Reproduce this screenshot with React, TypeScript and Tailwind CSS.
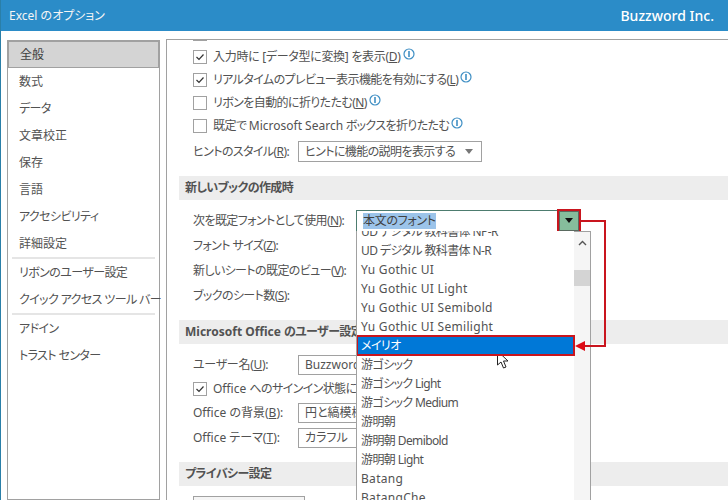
const navGroups = [
  ["全般", "数式", "データ", "文章校正", "保存", "言語", "アクセシビリティ", "詳細設定"],
  ["リボンのユーザー設定", "クイック アクセス ツール バー"],
  ["アドイン", "トラスト センター"],
];

const fonts = [
  "UD デジタル 教科書体 NP-R",
  "UD デジタル 教科書体 N-R",
  "Yu Gothic UI",
  "Yu Gothic UI Light",
  "Yu Gothic UI Semibold",
  "Yu Gothic UI Semilight",
  "メイリオ",
  "游ゴシック",
  "游ゴシック Light",
  "游ゴシック Medium",
  "游明朝",
  "游明朝 Demibold",
  "游明朝 Light",
  "Batang",
  "BatangChe",
];

const hasKana = (s: string) => /[\u3040-\u30ff]/.test(s);

function Info() {
  return (
    <svg width="12" height="12" viewBox="0 0 12 12" className="ml-0.5 -mt-1.5 shrink-0">
      <circle cx="6" cy="6" r="5" fill="white" stroke="#3f8fc4" strokeWidth="1.2" />
      <path d="M6 3v6" stroke="#3f8fc4" strokeWidth="1.6" />
    </svg>
  );
}

function CheckRow({ checked, children, info, tight }: { checked?: boolean; children: React.ReactNode; info?: boolean; tight?: boolean }) {
  return (
    <div className="flex h-[23px] items-center">
      <span className="mr-1.5 flex size-3.5 shrink-0 items-center justify-center border border-neutral-400 bg-white">
        {checked && (
          <svg width="10" height="10" viewBox="0 0 10 10">
            <path d="M1.500 5l2.500 2.500 4.500-5" fill="none" stroke="#333" strokeWidth="1.2" />
          </svg>
        )}
      </span>
      <span className={`whitespace-nowrap ${tight ? "tracking-tight" : "tracking-tighter"}`}>{children}</span>
      {info && <Info />}
    </div>
  );
}

function Key({ k }: { k: string }) {
  return (
    <>
      (<span className="underline">{k}</span>)
    </>
  );
}

function Heading({ children }: { children: React.ReactNode }) {
  return (
    <div className="ml-3 flex h-6 items-center whitespace-pre bg-neutral-200/70 pl-1.5 font-bold tracking-tighter text-neutral-600">
      {children}
    </div>
  );
}

function FieldRow({ label, value, tight }: { label: React.ReactNode; value?: string; tight?: string }) {
  return (
    <div className="flex h-[25px] items-center">
      <span className={`w-[105px] shrink-0 whitespace-nowrap ${tight ?? "tracking-tighter"}`}>{label}</span>
      {value && (
        <span className="flex h-5 w-56 items-center border border-neutral-400 pl-1.5">{value}</span>
      )}
    </div>
  );
}

export default function App() {
  return (
    <div className="relative flex h-[500px] w-[728px] flex-col overflow-hidden border-l border-[#2a7fa8] bg-white font-['Noto_Sans','Noto_Sans_CJK_JP',sans-serif] text-xs text-neutral-600 [font-feature-settings:'palt']">
      <div className="flex h-[31px] shrink-0 items-center justify-between bg-[#2b8cc8] pl-2 pr-3.5 text-white">
        <span className="text-neutral-100">Excel のオプション</span>
        <span className="text-sm font-medium">Buzzword Inc.</span>
      </div>

      <div className="flex min-h-0 flex-1 gap-1.5 pl-1.5 pt-2">
        {/* sidebar */}
        <div className="mt-px w-[153px] shrink-0 border border-neutral-400 bg-white">
          {navGroups.map((group, g) => (
            <div key={g}>
              {g > 0 && <div className="mx-1 border-t-2 border-neutral-200" />}
              {group.map((item, i) => (
                <div
                  key={item}
                  className={`flex h-[27px] items-center whitespace-nowrap pl-[11px] ${
                    hasKana(item) ? "tracking-tighter" : ""
                  } ${g === 0 && i === 0 ? "border border-neutral-400 bg-neutral-300 pl-2.5 text-neutral-700" : ""}`}
                >
                  {item}
                </div>
              ))}
            </div>
          ))}
        </div>

        {/* options */}
        <div className="min-w-0 flex-1 overflow-hidden border-l border-t border-neutral-400">
          <div className="-mt-4.5 pl-6.5">
            <CheckRow tight>
              選択時にクイック分析オプションを表示する(<span className="underline">E</span>)
            </CheckRow>
            <CheckRow checked info tight>
              入力時に [データ型に変換] を表示<Key k="D" />
            </CheckRow>
            <CheckRow checked info>
              リアルタイムのプレビュー表示機能を有効にする<Key k="L" />
            </CheckRow>
            <CheckRow info>
              リボンを自動的に折りたたむ<Key k="N" />
            </CheckRow>
            <CheckRow info>
              既定で <span className="tracking-normal">Microsoft Search</span> ボックスを折りたたむ
            </CheckRow>
            <div className="mt-1 flex h-[21px] items-center tracking-tighter">
              <span className="w-[105px] shrink-0 whitespace-nowrap">
                ヒントのスタイル<Key k="R" />:
              </span>
              <span className="flex h-[21px] w-46 items-center justify-between border border-neutral-400 pl-1.5 pr-2">
                ヒントに機能の説明を表示する
                <svg width="8" height="5" viewBox="0 0 8 5">
                  <path d="M0 0h8L4 5z" fill="#777" />
                </svg>
              </span>
            </div>
          </div>

          <div className="mt-3.5">
            <Heading>新しいブックの作成時</Heading>
          </div>
          <div className="mt-2 pl-6.5">
            <div className="flex h-[25px] items-center">
              <span className="w-[163px] shrink-0 whitespace-nowrap tracking-tighter">
                次を既定フォントとして使用<Key k="N" />:
              </span>
              <span className="flex h-[22px] w-56 items-center justify-between border border-[#4d7c6f] pl-1.5">
                <span className="bg-[#9cc4ea] tracking-tight text-neutral-700">本文のフォント</span>
                <span className="flex h-full w-5 items-center justify-center border border-[#5a6a60] bg-[#86bd9c] outline-2 outline-[#c9151e]">
                  <svg width="8" height="5" viewBox="0 0 8 5">
                    <path d="M0 0h8L4 5z" fill="#111" />
                  </svg>
                </span>
              </span>
            </div>
            <FieldRow label={<>フォント サイズ<Key k="Z" />:</>} />
            <FieldRow label={<>新しいシートの既定のビュー<Key k="V" />:</>} />
            <FieldRow label={<>ブックのシート数<Key k="S" />:</>} />
          </div>

          <div className="mt-3">
            <Heading>
              <span className="tracking-normal">Microsoft Office </span>のユーザー設定
            </Heading>
          </div>
          <div className="mt-2 pl-6.5">
            <FieldRow label={<>ユーザー名<Key k="U" />:</>} value="Buzzword" tight="tracking-tight" />
            <CheckRow checked>
              <span className="tracking-normal">Office </span>へのサインイン状態にかかわらず、常にこれらの設定を使用する
            </CheckRow>
            <FieldRow label={<>Office の背景<Key k="B" />:</>} value="円と縞模様" tight="" />
            <FieldRow label={<>Office テーマ<Key k="T" />:</>} value="カラフル" tight="" />
          </div>

          <div className="mt-3">
            <Heading>プライバシー設定</Heading>
          </div>
          <div className="mt-2.5 pl-6.5">
            <div className="h-6 w-28 border border-neutral-400 bg-neutral-100" />
          </div>
        </div>
      </div>

      {/* open font list */}
      <div className="absolute left-[355px] top-[231px] flex h-[269px] w-[235px] overflow-hidden border-x border-neutral-400 bg-white">
        <div className="-mt-[9px] min-w-0 flex-1">
          {fonts.map((f) => (
            <div
              key={f}
              className={`flex h-[19px] items-center whitespace-nowrap pl-1 ${
                hasKana(f) || /[\u4e00-\u9fff]/.test(f) ? "tracking-tighter" : "tracking-wide"
              } ${f === "メイリオ" ? "relative z-10 bg-[#0078d7] text-white outline-2 -outline-offset-1 outline-[#c9151e]" : ""}`}
            >
              {f}
            </div>
          ))}
        </div>
        <div className="flex w-4 shrink-0 flex-col items-center border-t border-neutral-400 bg-neutral-100">
          <svg width="9" height="6" viewBox="0 0 9 6" className="mt-2">
            <path d="M1 5l3.500-3.500L8 5" fill="none" stroke="#555" strokeWidth="1.4" />
          </svg>
          <div className="mt-6 h-4 w-full bg-neutral-300" />
        </div>
      </div>

      {/* red callout + pointer */}
      <svg width="728" height="500" className="pointer-events-none absolute -left-px top-0">
        <path d="M581 221H605V346H584" fill="none" stroke="#c9151e" strokeWidth="2" />
        <path d="M575 346l10-5v10z" fill="#dd0b16" />
        <path
          d="M497.500 351v14l3.500-3 2.500 6 2.500-1-2.500-6h4.500z"
          fill="white"
          stroke="#222"
          strokeWidth="1"
        />
      </svg>
    </div>
  );
}
